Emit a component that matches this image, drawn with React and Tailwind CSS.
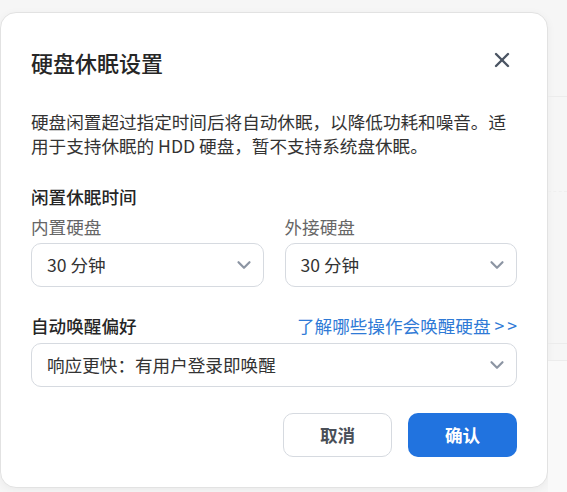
import React from "react";
import { ChevronDown, X } from "lucide-react";

function Select({ value }) {
  return (
    <button
      type="button"
      className="flex h-[44px] w-full items-center justify-between rounded-[10px] border border-[#d6dae0] bg-white pl-[15px] pr-[8px] text-left text-[17.6px] leading-[24px] text-[#333]"
    >
      <span>{value}</span>
      <ChevronDown size={22} strokeWidth={2.4} className="text-[#8c95a3]" />
    </button>
  );
}

export default function App() {
  return (
    <div className="flex h-[492px] w-[567px] overflow-hidden bg-[#f6f6f6] font-['Noto_Sans_CJK_SC','Noto_Sans',sans-serif]">
      {/* Dialog */}
      <div className="mt-[12px] h-[476px] w-[548px] shrink-0 self-start rounded-[16px] border border-[#e2e2e2] bg-white px-[30px] pt-[34px] pb-[30px] shadow-[0_2px_8px_rgba(0,0,0,0.05)]">
        {/* Header */}
        <div className="flex h-[30px] items-center justify-between">
          <h2 className="text-[22px] leading-[30px] font-medium text-[#262626]">硬盘休眠设置</h2>
          <button type="button" className="-mt-[4px] mr-[3px] text-[#4b5563]">
            <X size={24} strokeWidth={2.4} />
          </button>
        </div>

        {/* Description */}
        <p className="mt-[33px] text-[17.6px] leading-[24px] text-[#333]">
          硬盘闲置超过指定时间后将自动休眠，以降低功耗和噪音。适用于支持休眠的 HDD 硬盘，暂不支持系统盘休眠。
        </p>

        {/* Idle time */}
        <div className="mt-[27px] text-[17.6px] leading-[24px] font-medium text-[#262626]">闲置休眠时间</div>
        <div className="mt-[6px] grid grid-cols-2 gap-[21px]">
          <div>
            <div className="text-[17.6px] leading-[24px] text-[#666]">内置硬盘</div>
            <div className="mt-[4px]">
              <Select value="30 分钟" />
            </div>
          </div>
          <div>
            <div className="text-[17.6px] leading-[24px] text-[#666]">外接硬盘</div>
            <div className="mt-[4px]">
              <Select value="30 分钟" />
            </div>
          </div>
        </div>

        {/* Wake preference */}
        <div className="mt-[27px] flex items-center justify-between text-[17.6px] leading-[24px]">
          <span className="font-medium text-[#262626]">自动唤醒偏好</span>
          <a href="#" className="text-[#2f7ad6]">
            了解哪些操作会唤醒硬盘 <span className="tracking-[3px]">&gt;</span>&gt;
          </a>
        </div>
        <div className="mt-[5px]">
          <Select value="响应更快：有用户登录即唤醒" />
        </div>

        {/* Footer */}
        <div className="mt-[26px] flex justify-end gap-[16px]">
          <button
            type="button"
            className="h-[44px] w-[109px] rounded-[10px] border border-[#d6dae0] bg-white text-[17.6px] font-bold text-[#4a4f57]"
          >
            取消
          </button>
          <button
            type="button"
            className="h-[44px] w-[109px] rounded-[10px] bg-[#2173df] text-[17.6px] font-bold text-white"
          >
            确认
          </button>
        </div>
      </div>

      {/* Page behind the dialog */}
      <div className="flex flex-1 flex-col">
        <div className="h-[97px] border-b border-[#ececec]" />
        <div className="h-[95px] border-b border-dashed border-[#efefef]" />
        <div className="h-[152px] border-b border-[#ececec]" />
        <div className="h-[17px] border-b border-[#ececec]" />
        <div className="flex-1 bg-[#f9f9f9]" />
      </div>
    </div>
  );
}
